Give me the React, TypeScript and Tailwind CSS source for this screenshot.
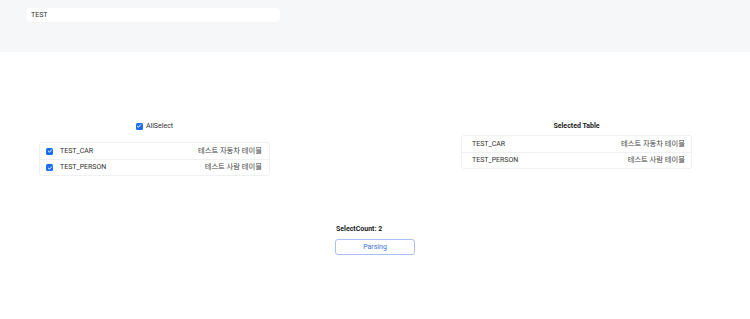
import React from "react";

const rows = [
  { name: "TEST_CAR", desc: "테스트 자동차 테이블" },
  { name: "TEST_PERSON", desc: "테스트 사람 테이블" },
];

function Check() {
  return (
    <span className="flex h-[7px] w-[7px] items-center justify-center rounded-[1.5px] bg-[#1b6ef3]">
      <svg viewBox="0 0 10 10" className="h-[6px] w-[6px]">
        <path d="M2.2 5.2 L4.2 7 L7.8 3" fill="none" stroke="white" strokeWidth="1.6" strokeLinecap="round" strokeLinejoin="round" />
      </svg>
    </span>
  );
}

export default function App() {
  return (
    <div
      className="h-[319px] w-[750px] bg-white text-[7px] text-[#333]"
      style={{ fontFamily: 'Roboto, "Noto Sans CJK KR", sans-serif' }}
    >
      <div className="h-[52px] bg-[#f6f7f9] pl-[26px] pt-[8px]">
        <div className="flex h-[14px] w-[254px] items-center rounded-[3px] bg-white pl-[5px] shadow-[0_0_1px_rgba(0,0,0,0.08)]">
          TEST
        </div>
      </div>
      <div className="flex pt-[69px]">
        <div className="ml-[39px] flex w-[231px] flex-col">
          <div className="flex h-[10px] items-center justify-center gap-[3px]">
            <Check />
            <span>AllSelect</span>
          </div>
          <div className="mt-[11px] rounded-[3px] border border-[#eef0f2]">
            {rows.map((r, i) => (
              <div
                key={r.name}
                className={`flex h-[16px] items-center pl-[6px] pr-[7px] ${i > 0 ? "border-t border-[#eef0f2]" : ""}`}
              >
                <Check />
                <span className="ml-[7px]">{r.name}</span>
                <span className="ml-auto text-[7.3px] text-[#444]">{r.desc}</span>
              </div>
            ))}
          </div>
        </div>
        <div className="ml-[191px] flex w-[231px] flex-col">
          <div className="flex h-[10px] items-center justify-center font-bold text-[#222]">Selected Table</div>
          <div className="mt-[4px] rounded-[3px] border border-[#eef0f2]">
            {rows.map((r, i) => (
              <div
                key={r.name}
                className={`flex h-[16px] items-center pl-[10px] pr-[6px] ${i > 0 ? "border-t border-[#eef0f2]" : ""}`}
              >
                <span>{r.name}</span>
                <span className="ml-auto text-[7.3px] text-[#444]">{r.desc}</span>
              </div>
            ))}
          </div>
        </div>
      </div>
      <div className="mt-[48px] flex justify-center">
        <div className="flex flex-col items-start">
          <div className="ml-[1px] h-[10px] font-bold leading-[10px] text-[#222]">SelectCount: 2</div>
          <button className="mt-[5px] flex h-[16px] w-[80px] items-center justify-center rounded-[3px] border border-[#a9c2f5] bg-white text-[#3f6fd8]">
            Parsing
          </button>
        </div>
      </div>
    </div>
  );
}
